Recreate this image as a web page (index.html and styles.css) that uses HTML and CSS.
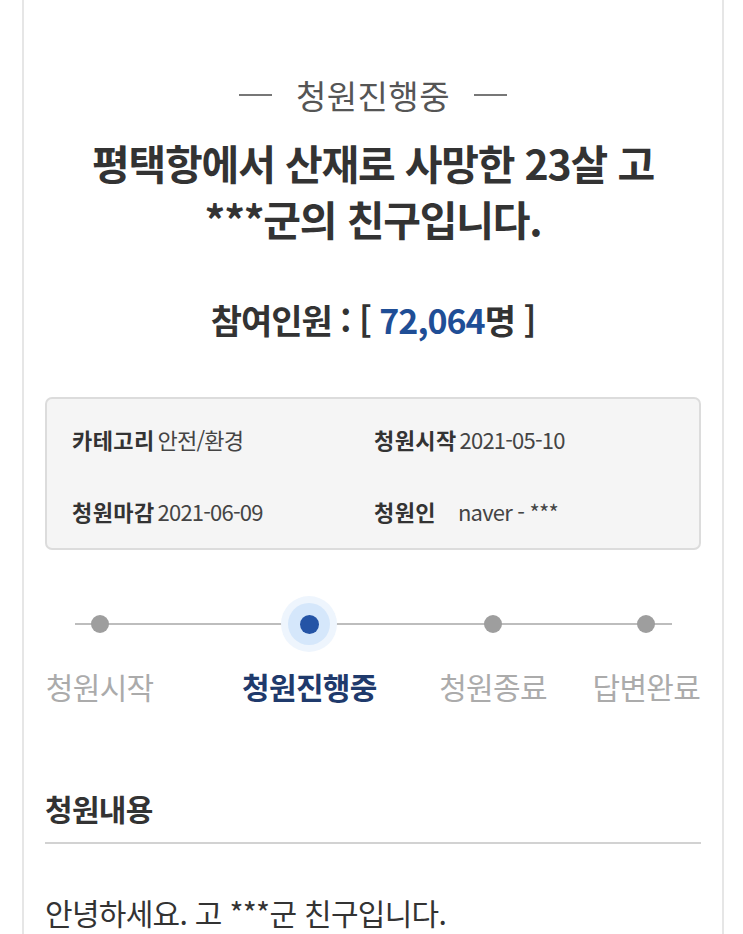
FILE: index.html
```html
<!DOCTYPE html>
<html lang="ko">
<head>
<meta charset="utf-8">
<title>청원진행중</title>
<link rel="stylesheet" href="styles.css">
</head>
<body>
<div class="card">
  <div class="status"><span class="status-text">청원진행중</span></div>
  <h1 class="title">평택항에서 산재로 사망한 23살 고<br>***군의 친구입니다.</h1>
  <div class="count">참여인원 : [ <span class="count-num">72,064</span>명 ]</div>

  <div class="info">
    <div class="info-item"><span class="info-label">카테고리</span><span class="info-value">안전/환경</span></div>
    <div class="info-item"><span class="info-label">청원시작</span><span class="info-value">2021-05-10</span></div>
    <div class="info-item"><span class="info-label">청원마감</span><span class="info-value">2021-06-09</span></div>
    <div class="info-item"><span class="info-label">청원인</span><span class="info-value">naver - ***</span></div>
  </div>

  <div class="steps">
    <div class="step step-start"><span class="dot-wrap"><span class="dot"></span></span><span class="step-label">청원시작</span></div>
    <div class="step step-progress active"><span class="dot-wrap"><span class="halo"><span class="halo-inner"><span class="dot"></span></span></span></span><span class="step-label">청원진행중</span></div>
    <div class="step step-closed"><span class="dot-wrap"><span class="dot"></span></span><span class="step-label">청원종료</span></div>
    <div class="step step-answered"><span class="dot-wrap"><span class="dot"></span></span><span class="step-label">답변완료</span></div>
  </div>

  <h2 class="section-title">청원내용</h2>
  <p class="content">안녕하세요. 고 ***군 친구입니다.</p>
</div>
</body>
</html>
```

FILE: styles.css
```css
html, body {
  margin: 0;
  padding: 0;
  background: #ffffff;
}
body {
  font-family: "Noto Sans CJK KR", "Noto Sans", sans-serif;
  color: #333333;
}
.card {
  box-sizing: border-box;
  width: 702px;
  min-height: 934px;
  margin-left: 22px;
  border-left: 2px solid #e6e6e6;
  border-right: 2px solid #e6e6e6;
  padding: 74px 21px 0;
}
.status {
  display: flex;
  align-items: center;
  justify-content: center;
  height: 42px;
  font-size: 33px;
  letter-spacing: 0.4px;
  color: #555555;
  gap: 24px;
}
.status::before,
.status::after {
  content: "";
  display: block;
  width: 33px;
  height: 2px;
  background: #777777;
}
.status-text {
  line-height: 42px;
}
.title {
  margin: 18px 0 0;
  text-align: center;
  font-size: 41px;
  line-height: 56px;
  font-weight: 700;
  letter-spacing: -1.2px;
  color: #333333;
}
.count {
  margin-top: 52px;
  text-align: center;
  font-size: 34px;
  line-height: 44px;
  font-weight: 700;
  letter-spacing: -1px;
  color: #333333;
}
.count-num {
  color: #1f4e96;
}
.info {
  margin-top: 55px;
  box-sizing: border-box;
  height: 153px;
  background: #f5f5f5;
  border: 2px solid #dcdcdc;
  border-radius: 7px;
  padding: 25px 25px 0;
  display: grid;
  grid-template-columns: 302px 1fr;
  row-gap: 42px;
  align-content: start;
}
.info-item {
  font-size: 22px;
  line-height: 30px;
  white-space: nowrap;
}
.info-label {
  display: inline-block;
  min-width: 81px;
  margin-right: 3px;
  font-weight: 700;
  letter-spacing: 0.4px;
  color: #333333;
}
.info-value {
  letter-spacing: -0.8px;
  color: #444444;
}
.steps {
  position: relative;
  display: flex;
  margin-top: 46px;
}
.steps::before {
  content: "";
  position: absolute;
  left: 30px;
  right: 29px;
  top: 27px;
  height: 2px;
  background: #bdbdbd;
}
.step {
  position: relative;
  width: 110px;
  display: flex;
  flex-direction: column;
  align-items: center;
  white-space: nowrap;
}
.step-progress { margin-left: 100px; }
.step-closed { margin-left: 74px; }
.step-answered { margin-left: 44px; }
.dot-wrap {
  height: 56px;
  display: flex;
  align-items: center;
  justify-content: center;
}
.dot {
  display: block;
  width: 18px;
  height: 18px;
  border-radius: 50%;
  background: #9e9e9e;
}
.halo {
  width: 56px;
  height: 56px;
  border-radius: 50%;
  background: #eef5fd;
  display: flex;
  align-items: center;
  justify-content: center;
}
.halo-inner {
  width: 42px;
  height: 42px;
  border-radius: 50%;
  background: #d5e7fb;
  display: flex;
  align-items: center;
  justify-content: center;
}
.active .dot {
  width: 19px;
  height: 19px;
  background: #2454a6;
}
.step-label {
  margin-top: 14px;
  font-size: 30px;
  line-height: 40px;
  letter-spacing: -0.7px;
  color: #ababab;
}
.active .step-label {
  font-weight: 700;
  color: #1f3a6c;
}
.section-title {
  margin: 82px 0 0;
  padding-bottom: 14px;
  border-bottom: 2px solid #d2d2d2;
  font-size: 30px;
  line-height: 40px;
  font-weight: 700;
  letter-spacing: -0.7px;
  color: #333333;
}
.content {
  margin: 48px 0 0;
  font-size: 30px;
  line-height: 40px;
  letter-spacing: -0.7px;
  color: #333333;
}
```
